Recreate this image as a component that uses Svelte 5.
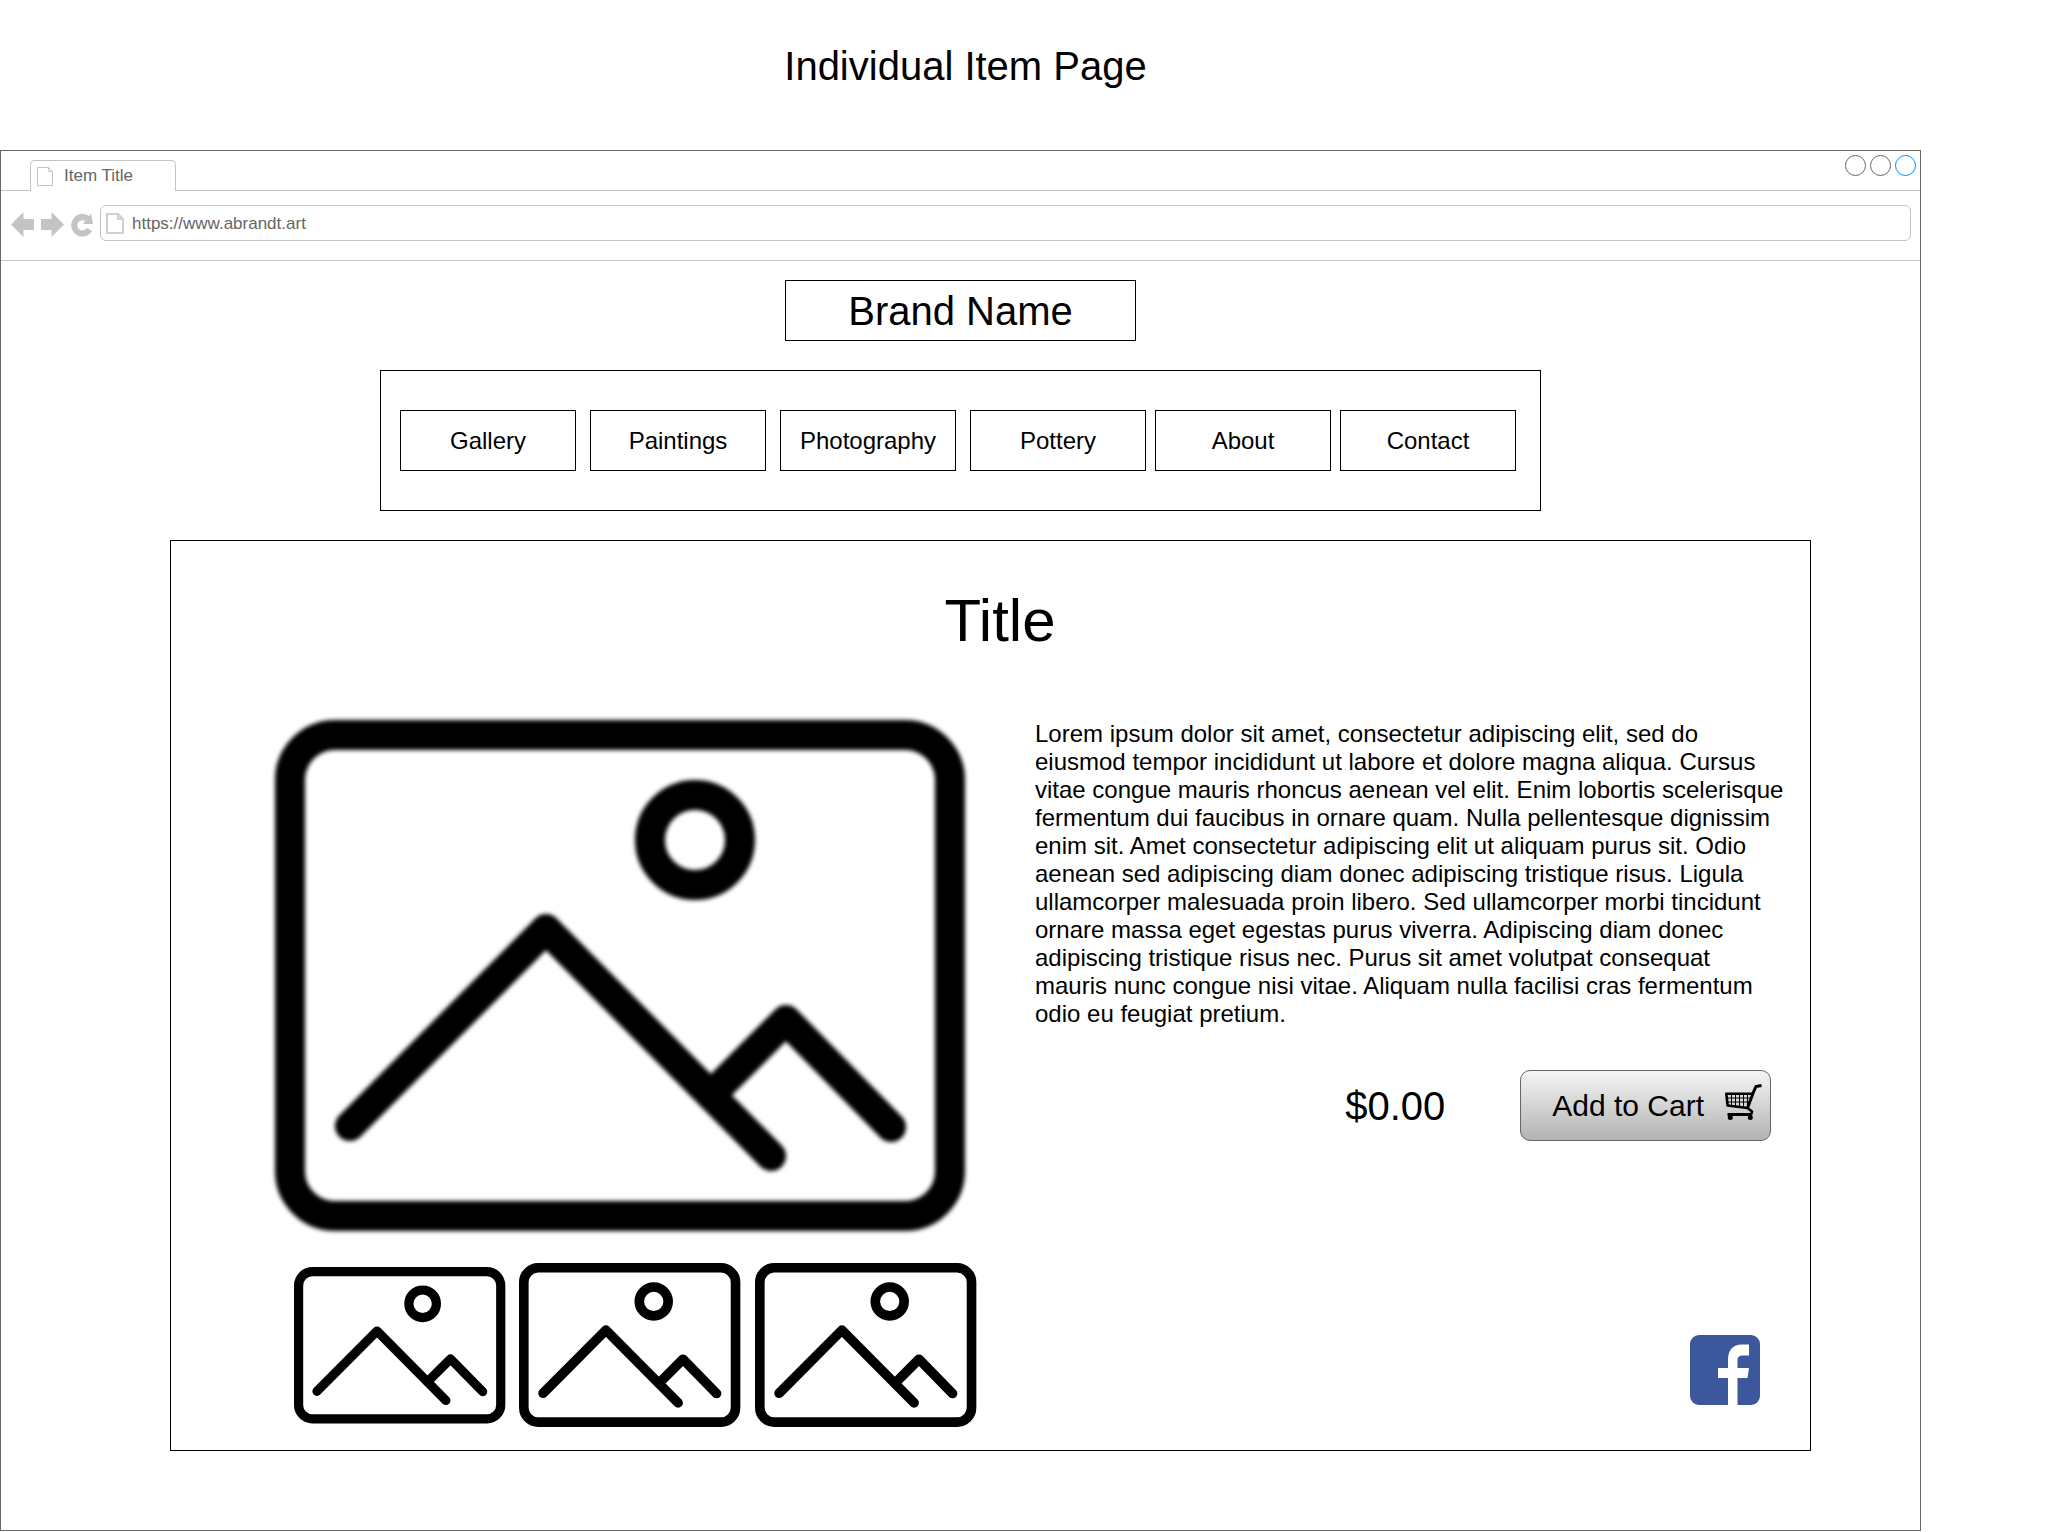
<script>
  const links = ['Gallery', 'Paintings', 'Photography', 'Pottery', 'About', 'Contact'];
  let address = $state('https://www.abrandt.art');
</script>

{#snippet picture()}
  <svg class="picture" viewBox="0 0 690 511" aria-hidden="true">
    <g fill="none" stroke="#000" stroke-width="30" stroke-linecap="round" stroke-linejoin="round">
      <rect x="15" y="15" width="660" height="481" rx="45" />
      <circle cx="420" cy="120" r="45" />
      <path d="M75 406 271 209 496 436" />
      <path d="M436 375 511 300 616 407" />
    </g>
  </svg>
{/snippet}

<h1>Individual Item Page</h1>

<div class="window">
  <div class="tabs">
    <button class="tab" type="button">
      <svg width="16" height="19" viewBox="0 0 16 19" aria-hidden="true">
        <path d="M.5.5H11.5L15.5 4.5V18.5H.5ZM11.5.5V4.5H15.5" fill="none" stroke="#c4c4c4" />
      </svg>
      Item Title
    </button>
    <div class="controls">
      <button type="button" aria-label="Minimize"></button>
      <button type="button" aria-label="Maximize"></button>
      <button class="close" type="button" aria-label="Close"></button>
    </div>
  </div>

  <div class="toolbar">
    <button type="button" aria-label="Back">
      <svg width="23" height="25" viewBox="0 0 23 25" aria-hidden="true">
        <path d="M0 12.500 12.500 0V7H23V18H12.500V25Z" fill="#c4c4c4" />
      </svg>
    </button>
    <button type="button" aria-label="Forward">
      <svg width="23" height="25" viewBox="0 0 23 25" aria-hidden="true">
        <path d="M23 12.500 10.500 0V7H0V18H10.500V25Z" fill="#c4c4c4" />
      </svg>
    </button>
    <button type="button" aria-label="Reload">
      <svg width="22" height="25" viewBox="0 0 22 25" aria-hidden="true">
        <path d="M18.500 17.500A8.200 8.200 0 1 1 16.500 6.800" fill="none" stroke="#c4c4c4" stroke-width="6.200" />
        <path d="M20 1.500 22 12H12Z" fill="#c4c4c4" />
      </svg>
    </button>
    <label class="address">
      <svg width="18" height="21" viewBox="0 0 18 21" aria-hidden="true">
        <path d="M1 1H12L17 6V20H1ZM12 1V6H17" fill="none" stroke="#d0d0d0" stroke-width="2" />
      </svg>
      <input type="text" aria-label="Address" bind:value={address} />
    </label>
  </div>

  <main>
    <div class="brand">Brand Name</div>

    <nav>
      {#each links as link}
        <a href="#{link.toLowerCase()}">{link}</a>
      {/each}
    </nav>

    <section class="item">
      <h2>Title</h2>
      <div class="columns">
        <div class="gallery">
          <div class="hero">{@render picture()}</div>
          <div class="thumbs">
            <a class="small" href="#view-1" aria-label="View 1">{@render picture()}</a>
            <a href="#view-2" aria-label="View 2">{@render picture()}</a>
            <a href="#view-3" aria-label="View 3">{@render picture()}</a>
          </div>
        </div>
        <div class="details">
          <p>
            Lorem ipsum dolor sit amet, consectetur adipiscing elit, sed do eiusmod tempor incididunt ut
            labore et dolore magna aliqua. Cursus vitae congue mauris rhoncus aenean vel elit. Enim
            lobortis scelerisque fermentum dui faucibus in ornare quam. Nulla pellentesque dignissim enim
            sit. Amet consectetur adipiscing elit ut aliquam purus sit. Odio aenean sed adipiscing diam
            donec adipiscing tristique risus. Ligula ullamcorper malesuada proin libero. Sed ullamcorper
            morbi tincidunt ornare massa eget egestas purus viverra. Adipiscing diam donec adipiscing
            tristique risus nec. Purus sit amet volutpat consequat mauris nunc congue nisi vitae. Aliquam
            nulla facilisi cras fermentum odio eu feugiat pretium.
          </p>
          <div class="buy">
            <span class="price">$0.00</span>
            <button class="cart" type="button">
              Add to Cart
              <svg width="37" height="43" viewBox="0 0 37 43" aria-hidden="true">
                <g fill="none" stroke="#000">
                  <path d="M36.500 1.500 31 2.500 28.500 8 22.500 24" stroke-width="3" />
                  <path d="M28 9.700H1.300L2.600 21.500 22.500 24 27 27.500 26 31" stroke-width="2.600" stroke-linejoin="round" />
                  <path d="M2.500 30.500H27" stroke-width="3" />
                  <path d="M6.500 10V22M10.500 10V22.500M14.500 10V23M18.500 10V23.500M22.500 10V23M2 14H26.500M2.500 18H25" stroke-width="1" />
                </g>
                <circle cx="5.300" cy="33.500" r="2.500" />
                <circle cx="25.300" cy="33.500" r="2.500" />
              </svg>
            </button>
          </div>
          <a class="facebook" href="#facebook" aria-label="Facebook">
            <svg width="70" height="70" viewBox="0 0 70 70" aria-hidden="true">
              <rect width="70" height="70" rx="9" fill="#3d579d" />
              <path d="M38 70V43H28V33H38V25C38 15 43 9.500 52 9.500H59V20.500H53C49 20.500 47.500 22 47.500 25.500V33H59L57.500 43H47.500V70Z" fill="#fff" />
            </svg>
          </a>
        </div>
      </div>
    </section>
  </main>
</div>

<style>
  :global(body) {
    background: #fff;
    color: #000;
    font-family: 'Liberation Sans', Arial, sans-serif;
  }

  :global(#app) * {
    box-sizing: border-box;
  }

  button,
  input {
    padding: 0;
    border: 0;
    background: none;
    color: inherit;
    font: inherit;
  }

  a {
    color: inherit;
    text-decoration: none;
  }

  svg {
    display: block;
    flex: none;
  }

  h1 {
    margin: 0;
    padding: 43px 120px 61px 0;
    font-size: 40px;
    font-weight: 400;
    line-height: 46px;
    text-align: center;
  }

  .window {
    margin-right: 130px;
    border: 1px solid #666;
  }

  .tabs {
    display: flex;
    justify-content: space-between;
    height: 40px;
    padding: 0 4px 0 29px;
    border-bottom: 1px solid #c4c4c4;
    color: #666;
    font-size: 17px;
  }

  .tab {
    display: flex;
    align-items: center;
    align-self: flex-end;
    gap: 11px;
    width: 146px;
    height: 31px;
    margin-bottom: -1px;
    padding-left: 6px;
    border: 1px solid #c4c4c4;
    border-bottom: 0;
    border-radius: 5px 5px 0 0;
    background: #fff;
  }

  .controls {
    display: flex;
    gap: 4px;
    padding-top: 4px;
  }

  .controls button {
    width: 21px;
    height: 21px;
    border: 1px solid #666;
    border-radius: 50%;
  }

  .controls .close {
    border-color: #008cff;
  }

  .toolbar {
    display: flex;
    align-items: center;
    gap: 7px;
    padding: 14px 9px 19px 10px;
    border-bottom: 1px solid #c4c4c4;
  }

  .toolbar button {
    padding-top: 2px;
  }

  .address {
    display: flex;
    flex: 1;
    align-items: center;
    gap: 8px;
    height: 36px;
    padding: 0 5px;
    border: 1px solid #c4c4c4;
    border-radius: 6px;
    color: #666;
    font-size: 17px;
  }

  .address input {
    flex: 1;
    min-width: 0;
    padding-top: 1px;
    outline: 0;
  }

  main {
    padding: 19px 0 79px;
  }

  .brand {
    width: 351px;
    margin: 0 auto;
    padding: 8px 0 6px;
    border: 1px solid #000;
    font-size: 40px;
    line-height: 45px;
    text-align: center;
  }

  nav {
    display: flex;
    max-width: 1161px;
    margin: 29px auto;
    padding: 39px 24px 39px 19px;
    border: 1px solid #000;
    font-size: 24px;
    line-height: 28px;
  }

  nav a {
    flex: 1;
    margin-right: 14px;
    padding: 16px 0 15px;
    border: 1px solid #000;
    text-align: center;
  }

  nav a:nth-child(n + 4) {
    margin-right: 9px;
  }

  nav a:last-child {
    margin-right: 0;
  }

  .item {
    margin: 0 109px 0 169px;
    padding: 46px 20px 23px 104px;
    border: 1px solid #000;
  }

  h2 {
    margin: 0 0 65px;
    padding-right: 65px;
    font-size: 60px;
    font-weight: 400;
    line-height: 68px;
    text-align: center;
  }

  .columns {
    display: grid;
    grid-template-columns: minmax(0, 701fr) minmax(0, 755fr);
    gap: 59px;
  }

  .picture {
    width: 100%;
    height: auto;
    overflow: visible;
  }

  .hero {
    padding-right: 11px;
    filter: blur(2px);
  }

  .thumbs {
    display: flex;
    align-items: center;
    gap: 14px;
    margin-top: 32px;
    padding-left: 19px;
  }

  .thumbs a {
    flex: 221;
  }

  .thumbs .small {
    flex: 211;
  }

  .details {
    display: flex;
    flex-direction: column;
  }

  p {
    margin: 0;
    padding-right: 4px;
    font-size: 24px;
    line-height: 28px;
  }

  .buy {
    display: flex;
    align-items: center;
    justify-content: flex-end;
    gap: 75px;
    margin: 42px 19px 0 0;
  }

  .price {
    font-size: 40px;
    line-height: 46px;
  }

  .cart {
    display: flex;
    align-items: center;
    gap: 21px;
    height: 71px;
    padding: 0 8px 0 31px;
    border: 1px solid #666;
    border-radius: 10px;
    background: linear-gradient(#f5f5f5, #b3b3b3);
    font-size: 30px;
    line-height: 34px;
  }

  .facebook {
    align-self: flex-end;
    margin: auto 30px 22px 0;
  }
</style>
